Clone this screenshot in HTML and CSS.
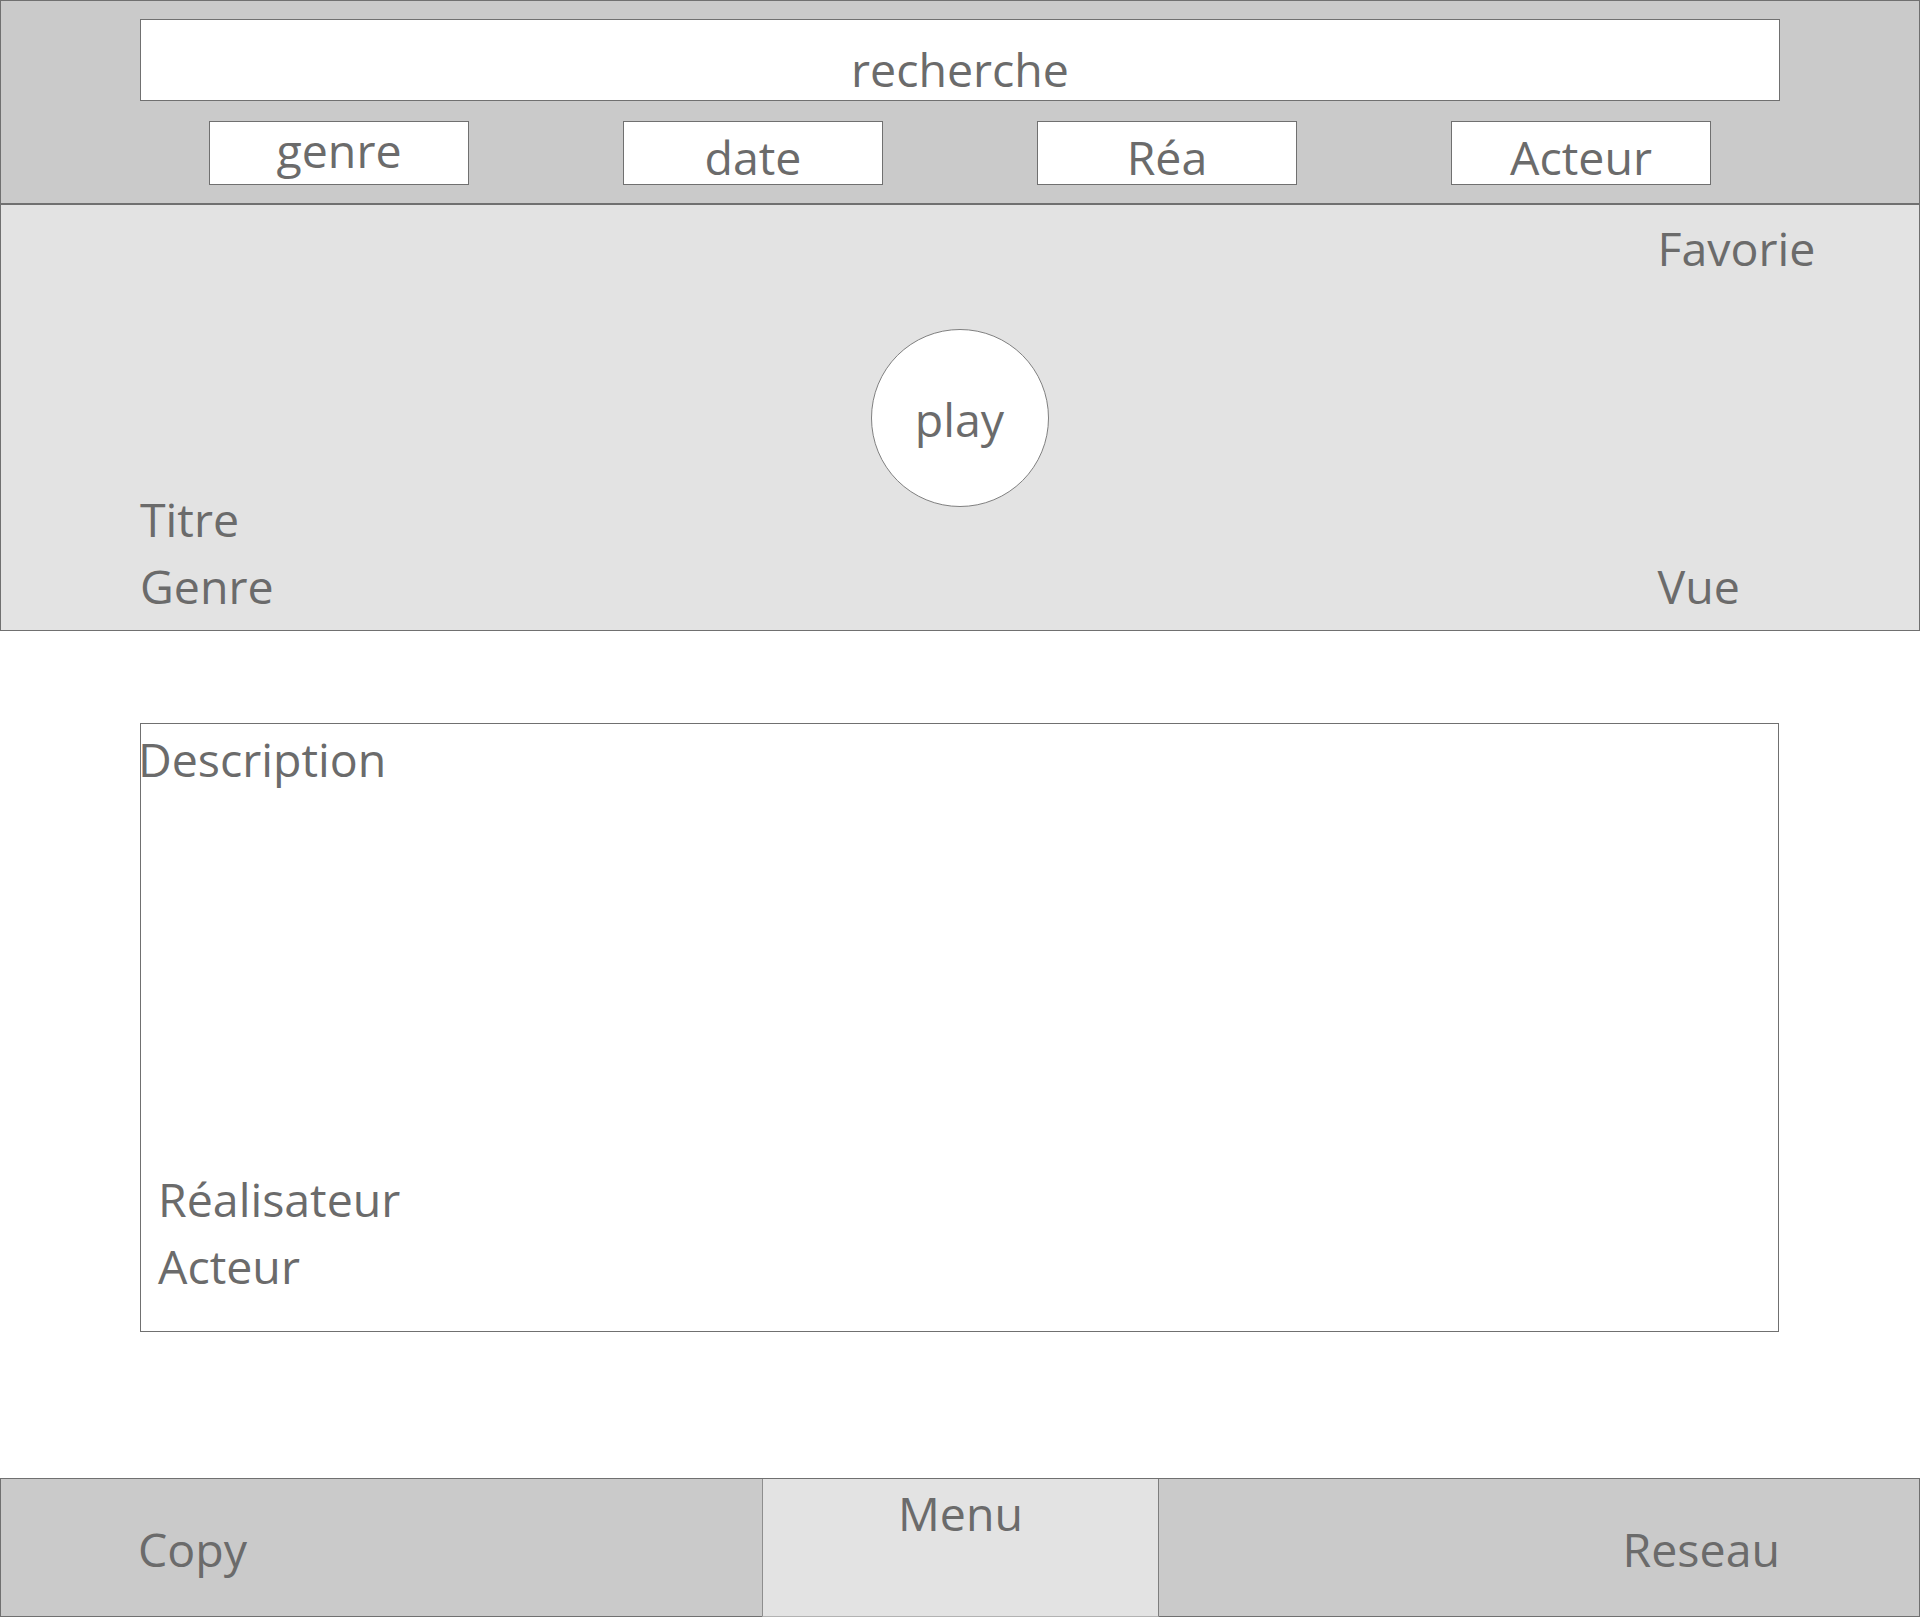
FILE: index.html
```html
<!DOCTYPE html>
<html lang="fr">
<head>
<meta charset="utf-8">
<title>Fiche film</title>
<link rel="stylesheet" href="styles.css">
</head>
<body>
<header class="topbar">
  <div class="search">recherche</div>
  <nav class="filters">
    <div class="filter filter--raised">genre</div>
    <div class="filter">date</div>
    <div class="filter">Réa</div>
    <div class="filter">Acteur</div>
  </nav>
</header>
<section class="hero">
  <div class="hero-info">
    <div class="label">Titre</div>
    <div class="label">Genre</div>
  </div>
  <div class="play">play</div>
  <div class="hero-side">
    <div class="label">Favorie</div>
    <div class="label">Vue</div>
  </div>
</section>
<main class="details">
  <div class="label details-title">Description</div>
  <div class="credits">
    <div class="label">Réalisateur</div>
    <div class="label">Acteur</div>
  </div>
</main>
<footer class="footer">
  <div class="label copy">Copy</div>
  <div class="label menu">Menu</div>
  <div class="label network">Reseau</div>
</footer>
</body>
</html>
```
FILE: styles.css
```css
html, body {
  margin: 0;
  padding: 0;
  background: #ffffff;
}
body {
  width: 1920px;
  height: 1619px;
  overflow: hidden;
  font-family: "Open Sans", "Noto Sans", "DejaVu Sans", sans-serif;
  font-size: 46.5px;
  line-height: 67px;
  color: #6b6b6b;
}
.label {
  white-space: nowrap;
}
.topbar {
  box-sizing: border-box;
  height: 205px;
  background: #cacaca;
  border: 1px solid #707070;
  border-bottom-width: 2px;
  padding-top: 18px;
  display: flex;
  flex-direction: column;
  align-items: center;
  gap: 20px;
}
.search {
  box-sizing: border-box;
  width: 1640px;
  height: 82px;
  background: #ffffff;
  border: 1px solid #707070;
  text-align: center;
  padding-top: 16px;
  white-space: nowrap;
}
.filters {
  display: flex;
  gap: 154px;
}
.filter {
  box-sizing: border-box;
  width: 260px;
  height: 64px;
  background: #ffffff;
  border: 1px solid #707070;
  text-align: center;
  line-height: 62px;
  padding-top: 4px;
  white-space: nowrap;
}
.filter--raised {
  line-height: 57px;
  padding-top: 0;
}
.hero {
  box-sizing: border-box;
  height: 426px;
  background: #e3e3e3;
  border: 1px solid #707070;
  border-top: none;
  padding: 10px 140px 10px 139px;
  display: grid;
  grid-template-columns: minmax(0, 1fr) 178px minmax(0, 1fr);
}
.hero-info {
  align-self: end;
}
.play {
  align-self: center;
  box-sizing: border-box;
  width: 178px;
  height: 178px;
  border-radius: 50%;
  background: #ffffff;
  border: 1px solid #808080;
  display: flex;
  align-items: center;
  justify-content: center;
  padding-top: 4px;
}
.hero-side {
  display: flex;
  flex-direction: column;
  justify-content: space-between;
  padding-left: 609px;
}
.details {
  box-sizing: border-box;
  width: 1639px;
  height: 609px;
  margin: 92px 0 0 140px;
  border: 1px solid #707070;
  display: flex;
  flex-direction: column;
  justify-content: space-between;
  padding-top: 2px;
  padding-bottom: 31px;
}
.details-title {
  margin-left: -3px;
}
.credits {
  padding-left: 17px;
}
.footer {
  box-sizing: border-box;
  height: 139px;
  margin-top: 146px;
  background: #cacaca;
  border: 1px solid #707070;
  display: grid;
  grid-template-columns: 761px 397px 1fr;
}
.copy {
  padding: 37px 0 0 137px;
}
.menu {
  background: #e3e3e3;
  border-left: 1px solid #8e8e8e;
  border-right: 1px solid #7e7e7e;
  border-bottom: 1px solid #b2b2b2;
  margin-bottom: -1px;
  padding-top: 1px;
  text-align: center;
}
.network {
  padding: 37px 139px 0 0;
  text-align: right;
}
```
